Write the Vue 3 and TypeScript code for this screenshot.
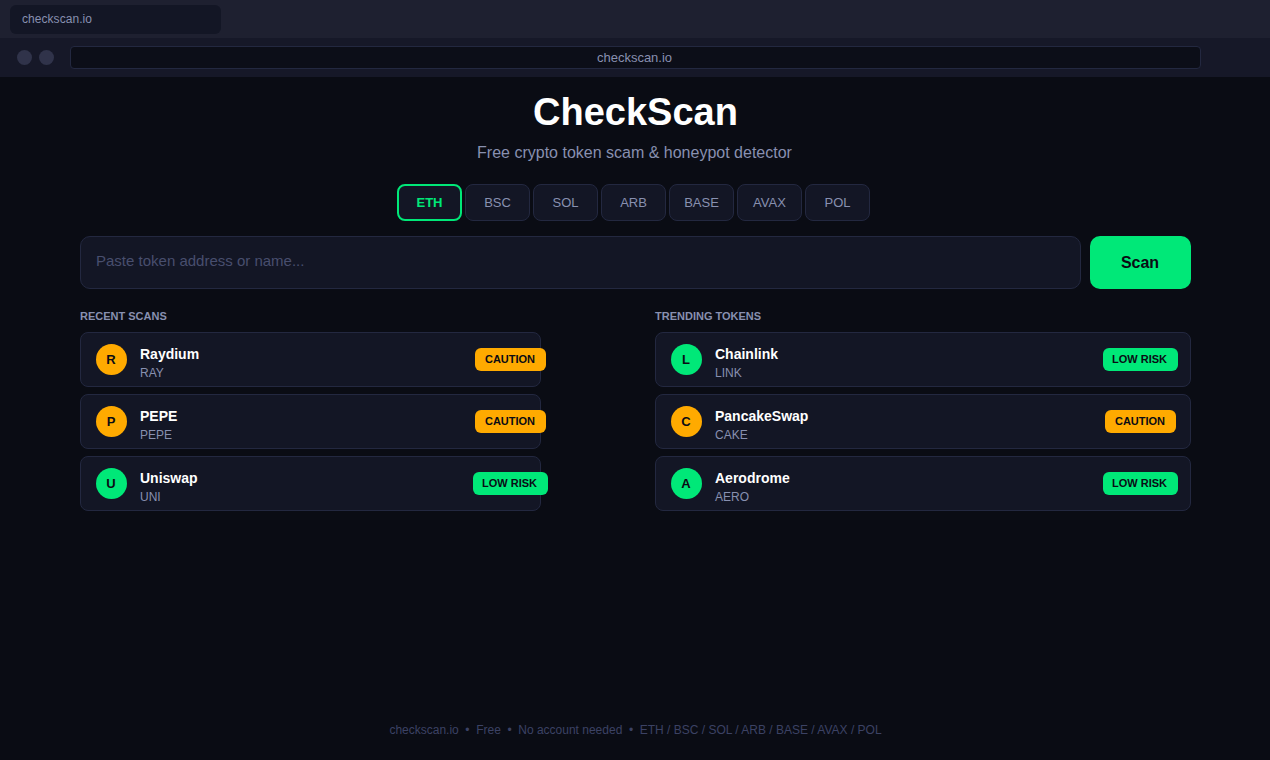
<script setup lang="ts">
type Risk = 'caution' | 'low'
interface Token { name: string; symbol: string; risk: Risk }

const chains: string[] = ['ETH', 'BSC', 'SOL', 'ARB', 'BASE', 'AVAX', 'POL']
const active = 'ETH'
const sections: { id: string; title: string; tokens: Token[] }[] = [
  {
    id: 'recent',
    title: 'RECENT SCANS',
    tokens: [
      { name: 'Raydium', symbol: 'RAY', risk: 'caution' },
      { name: 'PEPE', symbol: 'PEPE', risk: 'caution' },
      { name: 'Uniswap', symbol: 'UNI', risk: 'low' },
    ],
  },
  {
    id: 'trending',
    title: 'TRENDING TOKENS',
    tokens: [
      { name: 'Chainlink', symbol: 'LINK', risk: 'low' },
      { name: 'PancakeSwap', symbol: 'CAKE', risk: 'caution' },
      { name: 'Aerodrome', symbol: 'AERO', risk: 'low' },
    ],
  },
]
const labels: Record<Risk, string> = { caution: 'CAUTION', low: 'LOW RISK' }
const notes: string[] = ['checkscan.io', 'Free', 'No account needed', 'ETH / BSC / SOL / ARB / BASE / AVAX / POL']
</script>

<template>
  <div class="window">
    <div class="tabs"><div class="tab">checkscan.io</div></div>
    <div class="toolbar">
      <span class="dot"></span>
      <span class="dot"></span>
      <div class="url">checkscan.io</div>
    </div>
    <main class="page">
      <h1>CheckScan</h1>
      <p class="tagline">Free crypto token scam &amp; honeypot detector</p>
      <div class="chains">
        <button v-for="c in chains" :key="c" class="chain" :class="{ active: c === active }">{{ c }}</button>
      </div>
      <div class="search">
        <div class="field">Paste token address or name...</div>
        <button class="scan">Scan</button>
      </div>
      <div class="lists">
        <section v-for="s in sections" :key="s.id" :class="s.id">
          <h2>{{ s.title }}</h2>
          <div v-for="t in s.tokens" :key="t.symbol" class="card">
            <span class="avatar" :class="t.risk">{{ t.symbol[0] }}</span>
            <div class="info">
              <div class="name">{{ t.name }}</div>
              <div class="symbol">{{ t.symbol }}</div>
            </div>
            <div class="status"><span class="badge" :class="t.risk">{{ labels[t.risk] }}</span></div>
          </div>
        </section>
      </div>
      <footer>
        <template v-for="(n, i) in notes" :key="n"><span v-if="i" class="sep">•</span><span>{{ n }}</span></template>
      </footer>
    </main>
  </div>
</template>

<style>
body { margin: 0; background: #0a0c14; }
</style>

<style scoped>
.window {
  width: 1270px;
  height: 760px;
  display: flex;
  flex-direction: column;
  overflow: hidden;
  background: #0a0c14;
  color: #8890b0;
  font-family: "Liberation Sans", Arial, sans-serif;
}
.window * { box-sizing: border-box; }
button { font-family: inherit; padding: 0; }
.tabs { height: 38px; padding: 5px 10px 4px; background: #1e2030; }
.tab {
  width: 211px;
  height: 29px;
  padding-left: 12px;
  border-radius: 6px;
  background: #131625;
  font-size: 12px;
  line-height: 28px;
  letter-spacing: 0.05px;
}
.toolbar {
  height: 39px;
  display: flex;
  align-items: center;
  gap: 7px;
  padding-left: 17px;
  background: #161828;
}
.dot { width: 15px; height: 15px; border-radius: 50%; background: #30334a; }
.url {
  width: 1131px;
  height: 23px;
  margin-left: 9px;
  padding-right: 2px;
  border: 1px solid #232840;
  border-radius: 4px;
  background: #0c0e18;
  font-size: 13px;
  line-height: 22px;
  text-align: center;
}
.page { flex: 1; display: flex; flex-direction: column; padding: 0 79px 0 80px; }
h1 {
  margin: 13px 0 0;
  color: #fff;
  font-size: 38px;
  line-height: 44px;
  text-align: center;
}
.tagline { margin: 9px 2px 0 0; font-size: 16px; line-height: 20px; text-align: center; }
.chains { display: flex; justify-content: center; gap: 3px; margin: 21px 4px 0 0; }
.chain {
  width: 65px;
  height: 37px;
  border: 1px solid #232840;
  border-radius: 8px;
  background: #131625;
  color: #8890b0;
  font-size: 13px;
}
.chain.active { border: 2px solid #00e878; color: #00e878; font-weight: 700; }
.search { display: flex; gap: 9px; margin-top: 15px; }
.field {
  flex: 1;
  height: 53px;
  padding-left: 15px;
  border: 1px solid #232840;
  border-radius: 10px;
  background: #131625;
  color: #484e6e;
  font-size: 15px;
  line-height: 48px;
}
.scan {
  width: 101px;
  height: 53px;
  padding-right: 1px;
  border: 0;
  border-radius: 10px;
  background: #00e878;
  color: #0a0c14;
  font-size: 16px;
  font-weight: 700;
}
.lists { display: flex; justify-content: space-between; margin-top: 20px; }
.recent { width: 461px; }
.trending { width: 536px; }
h2 { margin: 0 0 9px; font-size: 11px; line-height: 14px; font-weight: 700; }
.card {
  height: 55px;
  display: flex;
  align-items: center;
  padding-left: 15px;
  margin-bottom: 7px;
  border: 1px solid #232840;
  border-radius: 8px;
  background: #131625;
}
.avatar {
  width: 31px;
  height: 31px;
  padding-right: 1px;
  border-radius: 50%;
  color: #0a0c14;
  font-size: 13px;
  font-weight: 700;
  line-height: 31px;
  text-align: center;
}
.info { flex: 1; margin-left: 13px; padding-top: 7px; }
.name { color: #fff; font-size: 14px; font-weight: 700; line-height: 18px; }
.symbol { font-size: 12px; line-height: 18px; margin-top: 1px; }
.status { width: 75px; display: flex; justify-content: center; }
.recent .status { margin-right: -8px; }
.trending .status { margin-right: 12px; }
.badge {
  width: 71px;
  height: 23px;
  padding-right: 1px;
  border-radius: 6px;
  color: #0a0c14;
  font-size: 11px;
  font-weight: 700;
  line-height: 23px;
  text-align: center;
}
.badge.low { width: 75px; padding-right: 2px; }
.low { background: #00e878; }
.caution { background: #ffaa00; }
footer {
  display: flex;
  justify-content: center;
  margin: auto 0 22px;
  color: #3c4264;
  font-size: 12px;
  line-height: 16px;
}
.sep { margin: 0 6.6px; }
</style>
